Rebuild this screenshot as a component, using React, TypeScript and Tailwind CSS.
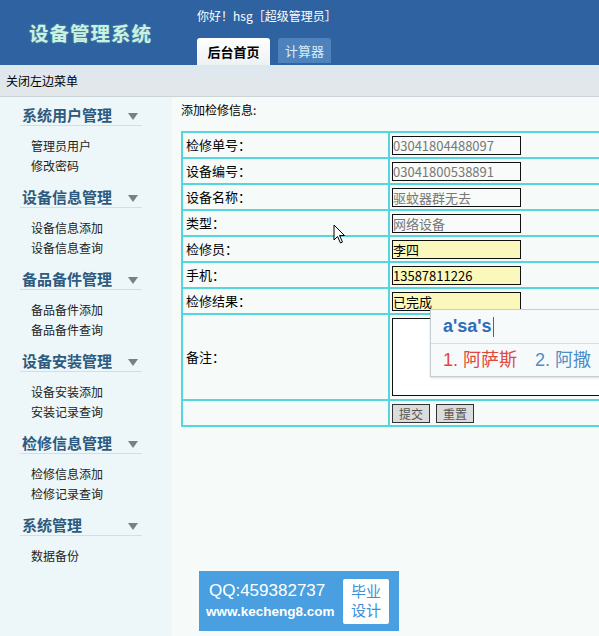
import React from 'react';

const groups = [
  { title: '系统用户管理', items: ['管理员用户', '修改密码'] },
  { title: '设备信息管理', items: ['设备信息添加', '设备信息查询'] },
  { title: '备品备件管理', items: ['备品备件添加', '备品备件查询'] },
  { title: '设备安装管理', items: ['设备安装添加', '安装记录查询'] },
  { title: '检修信息管理', items: ['检修信息添加', '检修记录查询'] },
  { title: '系统管理', items: ['数据备份'] },
];

const rows = [
  { label: '检修单号：', value: '03041804488097', yellow: false },
  { label: '设备编号：', value: '03041800538891', yellow: false },
  { label: '设备名称：', value: '驱蚊器群无去', yellow: false },
  { label: '类型：', value: '网络设备', yellow: false },
  { label: '检修员：', value: '李四', yellow: true },
  { label: '手机：', value: '13587811226', yellow: true },
  { label: '检修结果：', value: '已完成', yellow: true },
];

const font = "font-['SimSun','Noto_Sans_CJK_SC',sans-serif]";

export default function App() {
  return (
    <div className={`relative w-[599px] h-[636px] overflow-hidden bg-[#f6fbf9] text-black ${font}`}>
      {/* header */}
      <div className="h-[65px] bg-[#2f62a0] flex">
        <div className="w-[197px] shrink-0 flex items-center pl-[29px] pt-[1px]">
          <span className="text-[19.5px] font-bold tracking-[1px] text-[#c9f2e2] [text-shadow:0_0_2px_#5fa0b0]">设备管理系统</span>
        </div>
        <div className="flex flex-col">
          <div className="h-[38px] pt-[8px] text-[12px] text-white leading-[16px]">你好！hsg［超级管理员］</div>
          <div className="flex items-end gap-[8px]">
            <div className="w-[73px] h-[27px] bg-gradient-to-b from-white to-[#eef1f2] rounded-t-[3px] flex items-center justify-center text-[13px] font-bold text-black">后台首页</div>
            <div className="w-[53px] h-[25px] mb-[2px] bg-[#4d82bd] rounded-t-[3px] flex items-center justify-center text-[13px] text-[#d8ecf7]">计算器</div>
          </div>
        </div>
      </div>

      {/* toolbar */}
      <div className="h-[32px] bg-gradient-to-b from-[#dde8ef] to-[#e3e7e9] border-b border-[#c9d3d8] flex items-center pl-[6px] text-[12px]">
        关闭左边菜单
      </div>

      <div className="flex">
        {/* sidebar */}
        <div className="w-[172px] shrink-0 h-[540px] bg-[#edf6f8] pt-[7px]">
          {groups.map((g) => (
            <div key={g.title} className="mb-[10px]">
              <div className="mx-[20px] w-[122px] h-[22px] border-b border-[#d3dde2] flex items-center justify-between pl-[2px] pr-[4px]">
                <span className="text-[15px] font-bold text-[#2c5a80] leading-[20px]">{g.title}</span>
                <span className="w-0 h-0 border-l-[5px] border-r-[5px] border-t-[7px] border-l-transparent border-r-transparent border-t-[#7a7f84] mt-[3px]"></span>
              </div>
              <div className="pt-[10px] pl-[31px]">
                {g.items.map((it) => (
                  <div key={it} className="text-[12px] leading-[20px] text-[#222]">{it}</div>
                ))}
              </div>
            </div>
          ))}
        </div>

        {/* main */}
        <div className="flex-1 min-w-0 pl-[9px] pt-[4px]">
          <div className="text-[12px] leading-[18px] h-[30px]">添加检修信息:</div>
          <table className="w-[640px] border-collapse border-2 border-[#55d6de] text-[13px]">
            <tbody>
              {rows.map((r) => (
                <tr key={r.label} className="h-[26px]">
                  <td className="w-[207px] border-2 border-[#55d6de] pl-[3px] align-middle">{r.label}</td>
                  <td className="border-2 border-[#55d6de] pl-[2px] align-middle">
                    <div
                      className={`w-[129px] h-[19px] border border-[#111] leading-[17px] text-[13px] overflow-hidden whitespace-nowrap ${
                        r.yellow ? 'bg-[#fbf8bd] text-black' : 'bg-[#f8fbf9] text-[#777]'
                      }`}
                    >
                      {r.value}
                    </div>
                  </td>
                </tr>
              ))}
              <tr className="h-[86px]">
                <td className="border-2 border-[#55d6de] pl-[3px] align-middle">备注：</td>
                <td className="border-2 border-[#55d6de] pl-[2px] align-middle">
                  <div className="w-[300px] h-[78px] border border-[#111] bg-white"></div>
                </td>
              </tr>
              <tr className="h-[26px]">
                <td className="border-2 border-[#55d6de]"></td>
                <td className="border-2 border-[#55d6de] pl-[2px] align-middle">
                  <div className="flex gap-[6px]">
                    <button className="w-[38px] h-[19px] border border-[#333] bg-[#dcdcdc] text-[12px] text-[#555] leading-[17px]">提交</button>
                    <button className="w-[38px] h-[19px] border border-[#333] bg-[#dcdcdc] text-[12px] text-[#555] leading-[17px]">重置</button>
                  </div>
                </td>
              </tr>
            </tbody>
          </table>
        </div>
      </div>

      {/* IME candidate popup */}
      <div className="absolute left-[430px] top-[309px] w-[190px] h-[68px] bg-[#f7fafb] border border-[#c5ccd2] shadow-[0_1px_2px_rgba(0,0,0,0.15)] font-['Liberation_Sans','Noto_Sans_CJK_SC',sans-serif]">
        <div className="h-[34px] border-b border-[#d7dde2] flex items-center pl-[12px]">
          <span className="text-[18px] font-bold text-[#2f6db5]">a'sa's</span>
          <span className="ml-[1px] w-[1px] h-[20px] bg-[#d23030]"></span>
        </div>
        <div className="h-[33px] flex items-center pl-[12px] text-[18px] gap-[18px] whitespace-nowrap">
          <span className="text-[#e0483a]">1. 阿萨斯</span>
          <span className="text-[#4c8ec6]">2. 阿撒</span>
        </div>
      </div>

      {/* mouse cursor */}
      <svg className="absolute left-[333px] top-[224px]" width="13" height="21" viewBox="0 0 13 21">
        <path d="M1 1 L1 16 L4.5 12.5 L7.5 19 L9.5 18 L6.5 11.5 L11.5 11.5 Z" fill="white" stroke="black" strokeWidth="1" strokeLinejoin="round" />
      </svg>

      {/* watermark */}
      <div className="absolute left-[199px] top-[571px] w-[200px] h-[60px] bg-[#4a9fe0] flex items-center pl-[7px] pr-[10px] font-['Liberation_Sans','Noto_Sans_CJK_SC',sans-serif]">
        <div className="flex-1 text-white">
          <div className="text-[17px] leading-[22px] pl-[3px]">QQ:459382737</div>
          <div className="text-[13.5px] font-bold leading-[20px] whitespace-nowrap">www.kecheng8.com</div>
        </div>
        <div className="w-[46px] h-[45px] bg-white rounded-[2px] flex flex-col items-center justify-center text-[#3d8fd6] text-[15px] leading-[19px]">
          <span>毕业</span>
          <span>设计</span>
        </div>
      </div>
    </div>
  );
}
